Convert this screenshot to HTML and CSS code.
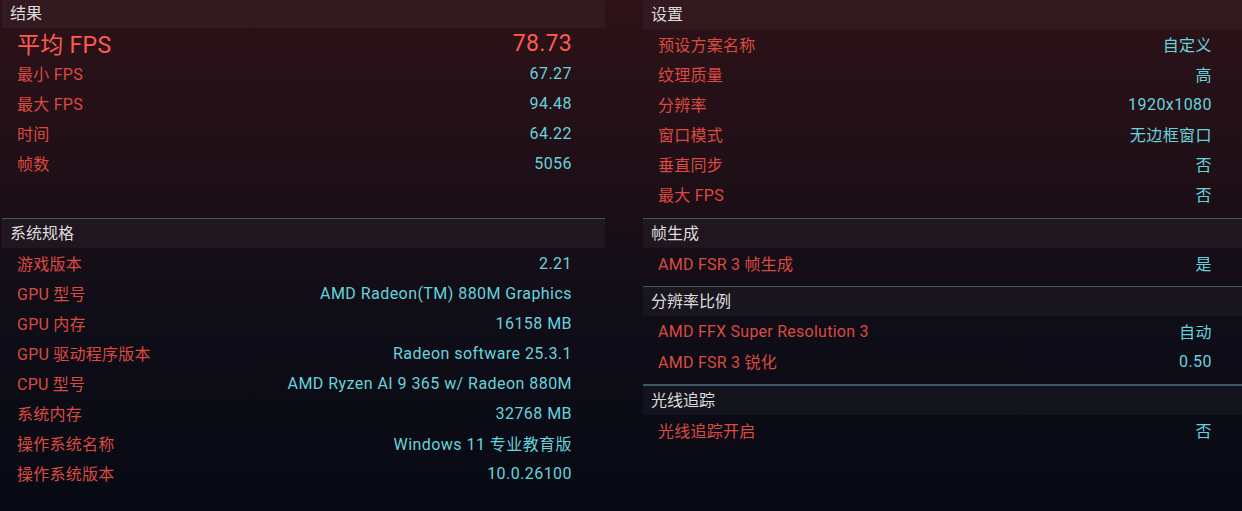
FILE: index.html
```html
<!DOCTYPE html>
<html lang="zh-CN">
<head>
  <meta charset="UTF-8">
  <meta name="viewport" content="width=device-width, initial-scale=1.0">
  <title>基准测试结果</title>
  <link rel="stylesheet" href="styles.css">
</head>
<body>
  <div class="screen">
    <div class="column left">
      <div class="section first">
        <div class="sec-title">结果</div>
        <div class="row big"><span class="label">平均 FPS</span><span class="value">78.73</span></div>
        <div class="row"><span class="label">最小 FPS</span><span class="value">67.27</span></div>
        <div class="row"><span class="label">最大 FPS</span><span class="value">94.48</span></div>
        <div class="row"><span class="label">时间</span><span class="value">64.22</span></div>
        <div class="row"><span class="label">帧数</span><span class="value">5056</span></div>
      </div>
      <div class="section">
        <div class="sec-title">系统规格</div>
        <div class="row"><span class="label">游戏版本</span><span class="value">2.21</span></div>
        <div class="row"><span class="label">GPU 型号</span><span class="value">AMD Radeon(TM) 880M Graphics</span></div>
        <div class="row"><span class="label">GPU 内存</span><span class="value">16158 MB</span></div>
        <div class="row"><span class="label">GPU 驱动程序版本</span><span class="value">Radeon software 25.3.1</span></div>
        <div class="row"><span class="label">CPU 型号</span><span class="value">AMD Ryzen AI 9 365 w/ Radeon 880M</span></div>
        <div class="row"><span class="label">系统内存</span><span class="value">32768 MB</span></div>
        <div class="row"><span class="label">操作系统名称</span><span class="value">Windows 11 专业教育版</span></div>
        <div class="row"><span class="label">操作系统版本</span><span class="value">10.0.26100</span></div>
      </div>
    </div>

    <div class="column right">
      <div class="section first">
        <div class="sec-title">设置</div>
        <div class="row"><span class="label">预设方案名称</span><span class="value">自定义</span></div>
        <div class="row"><span class="label">纹理质量</span><span class="value">高</span></div>
        <div class="row"><span class="label">分辨率</span><span class="value">1920x1080</span></div>
        <div class="row"><span class="label">窗口模式</span><span class="value">无边框窗口</span></div>
        <div class="row"><span class="label">垂直同步</span><span class="value">否</span></div>
        <div class="row"><span class="label">最大 FPS</span><span class="value">否</span></div>
      </div>
      <div class="section">
        <div class="sec-title">帧生成</div>
        <div class="row"><span class="label">AMD FSR 3 帧生成</span><span class="value">是</span></div>
      </div>
      <div class="section">
        <div class="sec-title">分辨率比例</div>
        <div class="row"><span class="label">AMD FFX Super Resolution 3</span><span class="value">自动</span></div>
        <div class="row"><span class="label">AMD FSR 3 锐化</span><span class="value">0.50</span></div>
      </div>
      <div class="section double">
        <div class="sec-title">光线追踪</div>
        <div class="row"><span class="label">光线追踪开启</span><span class="value">否</span></div>
      </div>
    </div>
  </div>
</body>
</html>
```

FILE: styles.css
```css
html, body {
  margin: 0;
  height: 100%;
}
body {
  font-family: Roboto, "Noto Sans CJK SC", sans-serif;
  font-size: 16px;
  background: linear-gradient(180deg, #2d1218 0%, #1f0f17 35%, #100d17 60%, #070a13 100%);
  color: #d8d8d8;
  overflow: hidden;
}
.screen {
  display: flex;
  gap: 38px;
  padding-left: 2px;
}
.column.left { width: 603px; }
.column.right { width: 599px; }
.left .row { padding: 0 33px 0 15px; }
.right .row { padding: 0 30px 0 15px; }

.section { padding-bottom: 8px; }
.section + .section { border-top: 1px solid #3f5968; }
.section.double { border-top: 2px solid #3f5968; }
.section.first { height: 210px; padding-bottom: 8px; }
.left .section.first .sec-title { height: 28px; line-height: 28px; }

.sec-title {
  height: 29px;
  line-height: 29px;
  padding-left: 8px;
  background: rgba(255, 255, 255, 0.035);
  color: #dcdcdc;
}
.row {
  display: flex;
  justify-content: space-between;
  align-items: center;
  height: 30px;
}
.label { color: #dc4a40; letter-spacing: 0.25px; }
.value { color: #67d3dc; letter-spacing: 0.45px; }
.row.big .label,
.row.big .value {
  font-size: 23px;
  letter-spacing: 0.3px;
  color: #ff5a4f;
}
```
